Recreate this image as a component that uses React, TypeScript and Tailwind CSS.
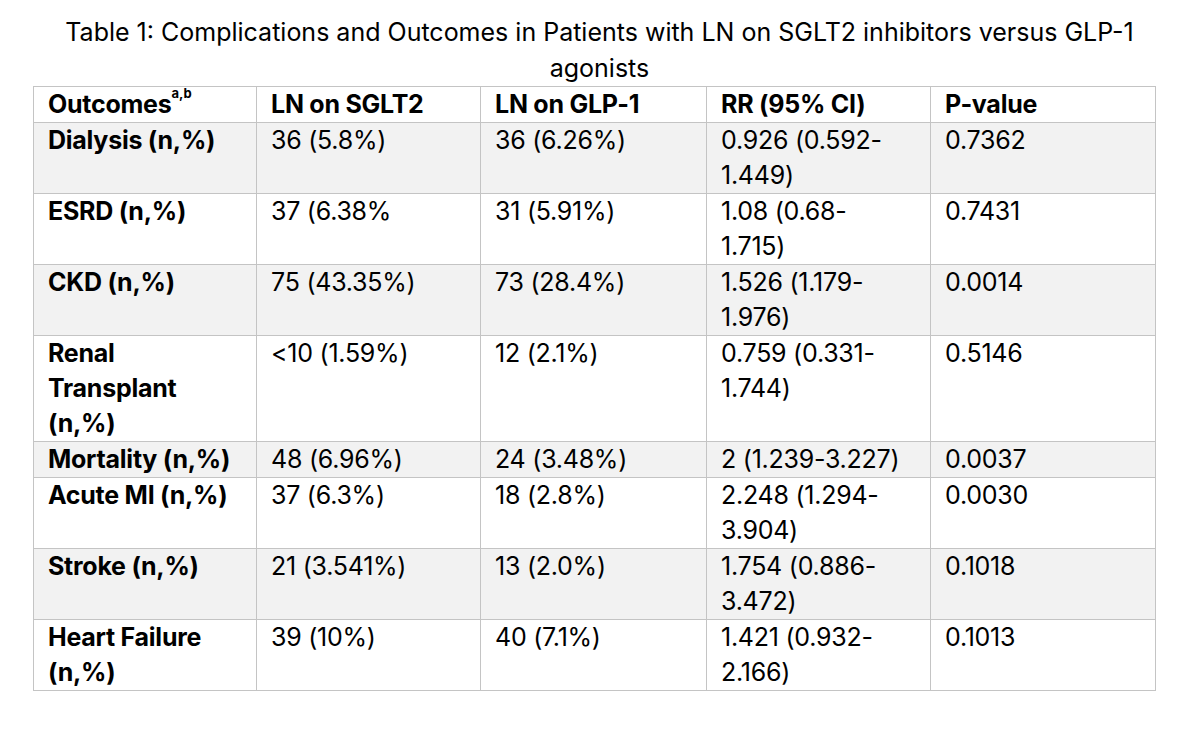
import React from 'react';

type Row = {
    label: React.ReactNode;
    sglt2: React.ReactNode;
    glp1: React.ReactNode;
    rr: React.ReactNode;
    p: string;
};

const ROWS: Row[] = [
    { label: 'Dialysis (n,%)', sglt2: '36 (5.8%)', glp1: '36 (6.26%)', rr: <>0.926 (0.592-<br />1.449)</>, p: '0.7362' },
    { label: 'ESRD (n,%)', sglt2: '37 (6.38%', glp1: '31 (5.91%)', rr: <>1.08 (0.68-<br />1.715)</>, p: '0.7431' },
    { label: 'CKD (n,%)', sglt2: '75 (43.35%)', glp1: '73 (28.4%)', rr: <>1.526 (1.179-<br />1.976)</>, p: '0.0014' },
    { label: <>Renal<br />Transplant<br />(n,%)</>, sglt2: '<10 (1.59%)', glp1: '12 (2.1%)', rr: <>0.759 (0.331-<br />1.744)</>, p: '0.5146' },
    { label: 'Mortality (n,%)', sglt2: '48 (6.96%)', glp1: '24 (3.48%)', rr: '2 (1.239-3.227)', p: '0.0037' },
    { label: 'Acute MI (n,%)', sglt2: '37 (6.3%)', glp1: '18 (2.8%)', rr: <>2.248 (1.294-<br />3.904)</>, p: '0.0030' },
    { label: 'Stroke (n,%)', sglt2: '21 (3.541%)', glp1: '13 (2.0%)', rr: <>1.754 (0.886-<br />3.472)</>, p: '0.1018' },
    { label: <>Heart Failure<br />(n,%)</>, sglt2: '39 (10%)', glp1: '40 (7.1%)', rr: <>1.421 (0.932-<br />2.166)</>, p: '0.1013' },
];

const cell = 'border border-[#c4c4c4] px-[14px] py-0 align-top text-left whitespace-nowrap';

export default function App() {
    return (
        <div className="min-h-[735px] w-[1199px] bg-white text-black font-['Inter',sans-serif] text-[25px] leading-[35px] tracking-[-0.01em] pt-[14px]">
            <h1 className="text-center font-normal leading-[36px] tracking-normal">
                Table 1: Complications and Outcomes in Patients with LN on SGLT2 inhibitors versus GLP-1<br />
                agonists
            </h1>

            <table className="ml-[33px] border-collapse table-fixed w-[1122px]">
                <colgroup>
                    <col className="w-[223px]" />
                    <col className="w-[224px]" />
                    <col className="w-[226px]" />
                    <col className="w-[224px]" />
                    <col className="w-[225px]" />
                </colgroup>
                <thead>
                    <tr className="bg-white font-bold">
                        <th className={cell}>Outcomes<sup className="text-[13px] align-[9px] tracking-normal">a,b</sup></th>
                        <th className={cell}>LN on SGLT2</th>
                        <th className={cell}>LN on GLP-1</th>
                        <th className={cell}>RR (95% CI)</th>
                        <th className={cell}>P-value</th>
                    </tr>
                </thead>
                <tbody>
                    {ROWS.map((row, i) => (
                        <tr key={i} className={i % 2 === 0 ? 'bg-[#f2f2f2]' : 'bg-white'}>
                            <td className={`${cell} font-bold`}>{row.label}</td>
                            <td className={cell}>{row.sglt2}</td>
                            <td className={cell}>{row.glp1}</td>
                            <td className={cell}>{row.rr}</td>
                            <td className={cell}>{row.p}</td>
                        </tr>
                    ))}
                </tbody>
            </table>
        </div>
    );
}
